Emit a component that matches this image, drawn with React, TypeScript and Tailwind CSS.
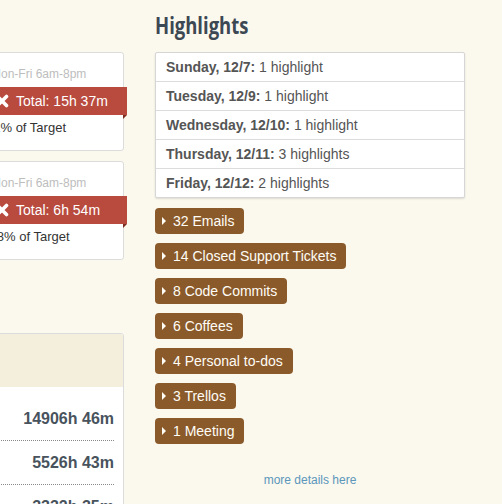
import React from "react"

const days = [
  { day: "Sunday, 12/7:", count: "1 highlight" },
  { day: "Tuesday, 12/9:", count: "1 highlight" },
  { day: "Wednesday, 12/10:", count: "1 highlight" },
  { day: "Thursday, 12/11:", count: "3 highlights" },
  { day: "Friday, 12/12:", count: "2 highlights" },
]

const tags = [
  "32 Emails",
  "14 Closed Support Tickets",
  "8 Code Commits",
  "6 Coffees",
  "4 Personal to-dos",
  "3 Trellos",
  "1 Meeting",
]

function TargetCard({ total, percent, first }: { total: string; percent: string; first?: boolean }) {
  return (
    <div
      className={`${first ? "" : "mt-[10px]"} bg-white border border-[#dcdcdc] rounded-[3px] pt-[13px] pb-[13px]`}
    >
      <div className="pl-[16px] text-[12px] leading-[16px] text-[#bdbdbd]">Mon-Fri 6am-8pm</div>
      <div className="relative mt-[5px] -ml-[1px] -mr-[4px] h-[28px] bg-[#b94a3e] flex items-center pl-[21px] text-white">
        <svg width="14" height="14" viewBox="0 0 14 14" className="shrink-0">
          <path d="M2.5 2.5 11.5 11.5M11.5 2.5 2.5 11.5" stroke="white" strokeWidth="3.6" strokeLinecap="round" />
        </svg>
        <span className="ml-[7px] text-[14px] leading-[18px]">Total: {total}</span>
        <span className="absolute right-0 top-full w-0 h-0 border-t-[4px] border-t-[#7d2c22] border-r-[4px] border-r-transparent" />
      </div>
      <div className="mt-[4px] pl-[11px] text-[13px] leading-[18px] text-[#333]">{percent} of Target</div>
    </div>
  )
}

export default function App() {
  return (
    <div
      className="h-[504px] overflow-hidden bg-[#fbf8ee] pt-[11px]"
      style={{ fontFamily: '"Liberation Sans", Arial, sans-serif' }}
    >
      <div className="flex -ml-[26px] gap-[31px]">
        <div className="w-[150px] shrink-0 mt-[41px]">
          <TargetCard first total="15h 37m" percent="22%" />
          <TargetCard total="6h 54m" percent="9.8%" />

          <div className="mt-[73px] bg-white border border-[#dcdcdc] rounded-[3px] overflow-hidden">
            <div className="h-[53px] bg-[#f4efdc]" />
            <div className="pt-[10px] mr-[9px]">
              {["14906h 46m", "5526h 43m", "3332h 35m"].map((v) => (
                <div
                  key={v}
                  className="h-[44px] flex items-center justify-end border-b border-dotted border-[#888] text-[16px] font-bold text-[#48535d]"
                >
                  {v}
                </div>
              ))}
            </div>
          </div>
        </div>

        <div className="w-[310px] shrink-0">
          <h2
            className="text-[24px] leading-[28px] font-bold text-[#3c4853] mb-[13px] origin-left scale-x-[0.77] whitespace-nowrap"
            style={{ fontFamily: '"Open Sans", "DejaVu Sans Condensed", sans-serif' }}
          >
            Highlights
          </h2>

          <ul className="bg-white border border-[#d6d6d6] rounded-[2px] shadow-[0_1px_2px_rgba(0,0,0,0.12)]">
            {days.map((d) => (
              <li
                key={d.day}
                className="border-b border-[#dcdcdc] last:border-b-0 h-[29px] last:h-[28px] flex items-center pl-[10px] text-[14px] text-[#555]"
              >
                <span className="font-bold">{d.day}</span>
                <span>&nbsp;{d.count}</span>
              </li>
            ))}
          </ul>

          <div className="mt-[10px] flex flex-col items-start gap-[9px]">
            {tags.map((t) => (
              <button
                key={t}
                className="h-[26px] inline-flex items-center pl-[7px] pr-[10px] rounded-[4px] bg-[#8a5a2b] text-[#fffdf6] text-[14px]"
              >
                <svg width="4" height="8" viewBox="0 0 4 8" className="shrink-0">
                  <path d="M0 0 4 4 0 8Z" fill="#fffdf6" />
                </svg>
                <span className="ml-[7px]">{t}</span>
              </button>
            ))}
          </div>

          <div className="mt-[28px] text-center text-[12px] leading-[16px]">
            <a href="#" className="text-[#5a97bb]">
              more details here
            </a>
          </div>
        </div>
      </div>
    </div>
  )
}
